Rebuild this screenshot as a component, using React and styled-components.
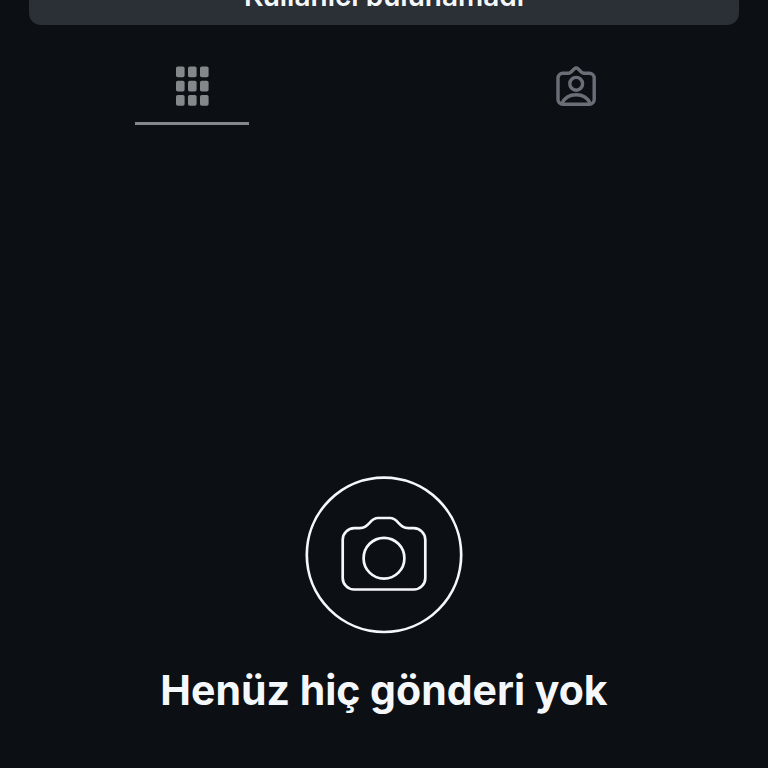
import React from "react";
import styled, { createGlobalStyle } from "styled-components";

const cells = [0, 1, 2];

function GridIcon() {
  return (
    <svg width="40" height="40" viewBox="0 0 40 40" fill="#85888b" aria-hidden="true">
      {cells.map((row) =>
        cells.map((col) => (
          <rect
            key={`${row}-${col}`}
            x={4 + col * 12}
            y={0.5 + row * 14.2}
            width="8.6"
            height="10.8"
            rx="1.8"
          />
        ))
      )}
    </svg>
  );
}

function TaggedIcon() {
  return (
    <svg
      width="40"
      height="40"
      viewBox="0 0 40 40"
      fill="none"
      stroke="#6b6e76"
      strokeWidth="3.4"
      strokeLinejoin="round"
      aria-hidden="true"
    >
      <path d="M6.8 7.2H12.4C13.6 7.2 14.3 6.8 15.1 6L18.5 2.6Q20.2 1.2 21.9 2.6L25.3 6C26.1 6.8 26.8 7.2 28 7.2H33.4A4.8 4.8 0 0 1 38.2 12V33.4A4.8 4.8 0 0 1 33.4 38.2H6.8A4.8 4.8 0 0 1 2 33.4V12A4.8 4.8 0 0 1 6.8 7.2Z" />
      <circle cx="20.2" cy="17.8" r="6.4" />
      <path d="M6 37.6C8.4 32 13.6 28.8 20.1 28.8S31.8 32 34.2 37.6" />
    </svg>
  );
}

function CameraIcon() {
  return (
    <svg
      width="158"
      height="158"
      viewBox="0 0 158 158"
      fill="none"
      stroke="#f5f8fa"
      strokeWidth="2.7"
      strokeLinejoin="round"
      aria-hidden="true"
    >
      <circle cx="79" cy="78.8" r="77.2" />
      <path d="M49.3 52.2H54.5C59.5 52.2 61.6 50 64.8 46.6C67.6 43.4 69.4 42 73 42H85C88.6 42 90.4 43.4 93.2 46.6C96.4 50 98.5 52.2 103.5 52.2H108.7A11.6 11.6 0 0 1 120.3 63.8V101.9A11.6 11.6 0 0 1 108.7 113.5H49.3A11.6 11.6 0 0 1 37.7 101.9V63.8A11.6 11.6 0 0 1 49.3 52.2Z" />
      <circle cx="79" cy="82.2" r="20.4" />
    </svg>
  );
}

function App() {
  return (
    <>
      <GlobalStyle />
      <Page>
        <Notice type="button">Kullanıcı bulunamadı</Notice>
        <Tabs aria-label="Profil">
          <Tab type="button" $active aria-label="Gönderiler">
            <GridIcon />
          </Tab>
          <Tab type="button" aria-label="Etiketlenenler">
            <TaggedIcon />
          </Tab>
        </Tabs>
        <Empty>
          <CameraIcon />
          <Title>Henüz hiç gönderi yok</Title>
        </Empty>
      </Page>
    </>
  );
}

export default App;

const GlobalStyle = createGlobalStyle`
  * {
    box-sizing: border-box;
  }
  body {
    margin: 0;
    background: #0c0f14;
    color: #f5f8fa;
    font-family: Inter, "Liberation Sans", sans-serif;
  }
`;

const Page = styled.main`
  display: flex;
  flex-direction: column;
  min-height: 100vh;
  overflow: hidden;
`;

// The notice is scrolled halfway past the top edge.
const Notice = styled.button`
  height: 58px;
  margin: -33px 29px 0;
  padding: 0 16px;
  border: 0;
  border-radius: 12px;
  background: #2b2f36;
  color: #f5f8fa;
  font-family: inherit;
  font-size: 28px;
  font-weight: 600;
  line-height: 32px;
`;

const Tabs = styled.nav`
  display: grid;
  grid-template-columns: 1fr 1fr;
  justify-items: center;
  padding-top: 41px;
`;

const Tab = styled.button`
  display: flex;
  justify-content: center;
  width: 114px;
  height: 59px;
  padding: 0;
  border: 0;
  border-bottom: 3px solid ${(props) => (props.$active ? "#85888b" : "transparent")};
  background: none;
`;

const Empty = styled.section`
  display: flex;
  flex-direction: column;
  align-items: center;
  gap: 32px;
  padding: 351px 24px 48px;
`;

const Title = styled.h1`
  margin: 0;
  font-size: 41px;
  font-weight: 700;
  line-height: 48px;
  text-align: center;
`;
